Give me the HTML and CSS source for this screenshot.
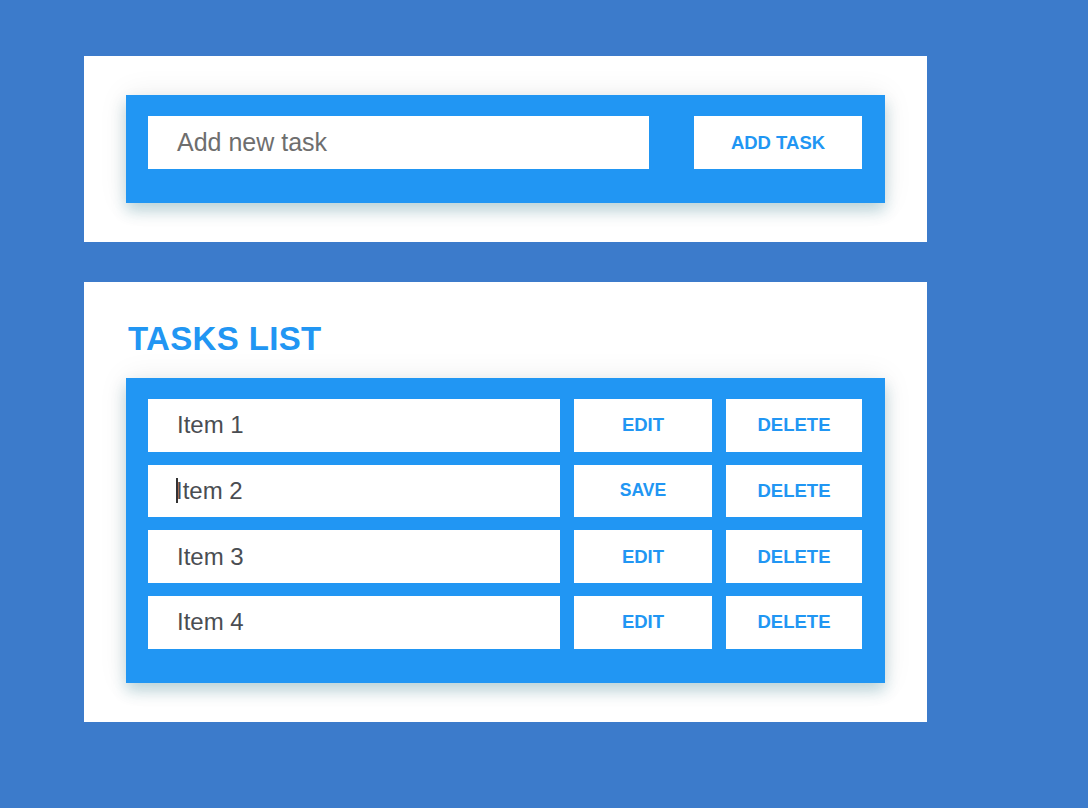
FILE: index.html
```html
<!DOCTYPE html>
<html lang="en">
<head>
<meta charset="utf-8">
<title>Tasks</title>
<link rel="stylesheet" href="styles.css">
</head>
<body>
<main class="page">
  <section class="card">
    <div class="panel add-panel">
      <div class="field placeholder">Add new task</div>
      <button class="btn">ADD TASK</button>
    </div>
  </section>
  <section class="card list-card">
    <h1 class="title">TASKS LIST</h1>
    <div class="panel list-panel">
      <div class="field">Item 1</div>
      <button class="btn">EDIT</button>
      <button class="btn">DELETE</button>

      <div class="field"><span class="caret"></span>Item 2</div>
      <button class="btn btn-save">SAVE</button>
      <button class="btn">DELETE</button>

      <div class="field">Item 3</div>
      <button class="btn">EDIT</button>
      <button class="btn">DELETE</button>

      <div class="field">Item 4</div>
      <button class="btn">EDIT</button>
      <button class="btn">DELETE</button>
    </div>
  </section>
</main>
</body>
</html>
```
FILE: styles.css
```css
html, body {
  margin: 0;
  padding: 0;
}
body {
  background: #3c7bcb;
  font-family: "Liberation Sans", Arial, sans-serif;
  width: 1088px;
  height: 808px;
  overflow: hidden;
}
.page {
  display: flex;
  flex-direction: column;
  gap: 40px;
  width: 843px;
  margin: 56px 0 0 84px;
}
.card {
  background: #ffffff;
  padding: 39px 42px;
}
.list-card {
  padding-top: 38px;
}
.title {
  margin: 0 0 20px 2px;
  font-size: 33px;
  line-height: 38px;
  font-weight: 700;
  letter-spacing: 0.35px;
  color: #2196f3;
}
.panel {
  background: #2196f3;
  padding: 21px 23px 34px 22px;
  box-shadow: 0 8px 14px rgba(0, 105, 125, 0.24), 0 0 28px rgba(0, 0, 0, 0.08);
}
.add-panel {
  display: flex;
  gap: 45px;
}
.add-panel .field {
  flex: 1;
  height: 53px;
  font-size: 25px;
}
.add-panel .btn {
  width: 168px;
  height: 53px;
}
.list-panel {
  display: grid;
  grid-template-columns: 1fr 138px 136px;
  grid-auto-rows: 52.67px;
  gap: 13px 14px;
  padding-bottom: 34.33px;
}
.field {
  display: flex;
  align-items: center;
  background: #ffffff;
  padding-left: 29px;
  font-size: 24px;
  color: #4a4d52;
}
.placeholder {
  color: #6e6e6e;
  padding-left: 29px;
}
.caret {
  display: inline-block;
  width: 1.5px;
  height: 25px;
  background: #333;
  margin-right: -1.5px;
  margin-left: -1px;
}
.btn {
  border: 0;
  margin: 0;
  padding: 0;
  background: #ffffff;
  color: #2196f3;
  font-family: "Liberation Sans", Arial, sans-serif;
  font-size: 18.5px;
  font-weight: 700;
  cursor: pointer;
}
.btn-save {
  font-size: 17.5px;
}
```
